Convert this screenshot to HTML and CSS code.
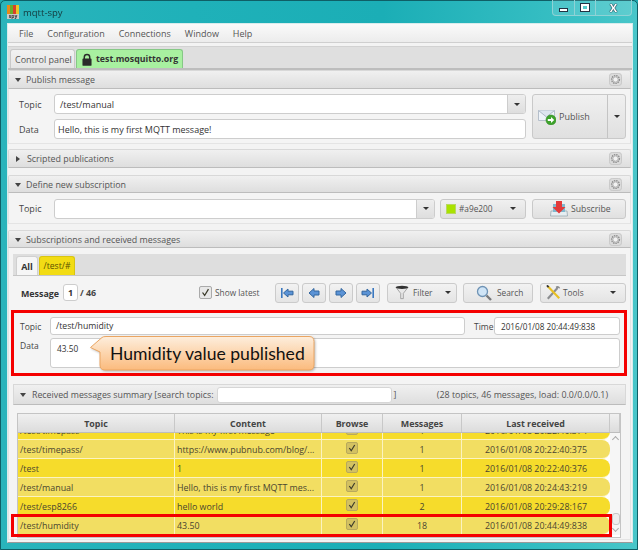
FILE: index.html
```html
<!DOCTYPE html>
<html lang="en">
<head>
<meta charset="utf-8">
<title>mqtt-spy</title>
<link rel="stylesheet" href="styles.css">
</head>
<body>
<svg class="defs" width="0" height="0" aria-hidden="true">
  <defs>
    <symbol id="gear" viewBox="0 0 14 14">
      <rect x=".5" y=".5" width="13" height="13" rx="3" fill="#dcdcdc" stroke="#c6c6c6"/>
      <circle cx="7" cy="7" r="4.2" fill="none" stroke="#8e8e8e" stroke-width="1.5" stroke-dasharray="1.6 .9"/>
      <circle cx="7" cy="7" r="2.8" fill="#f2f2f2" stroke="#9a9a9a" stroke-width=".7"/>
    </symbol>
    <symbol id="nav-left" viewBox="0 0 14 14">
      <path d="M2 7 7 2.500V5h5v4H7v2.500Z" fill="#5b93d6" stroke="#33669f"/>
    </symbol>
    <symbol id="nav-first" viewBox="0 0 14 14">
      <rect x="1" y="2" width="1.600" height="10" fill="#3a78c0"/>
      <path d="M3.500 7 8 3V5.200h5v3.600H8V11Z" fill="#5b93d6" stroke="#33669f"/>
    </symbol>
    <symbol id="chk" viewBox="0 0 13 13">
      <path d="M3 6.500 5.500 10 10 2.500" fill="none" stroke="#3a3a2a" stroke-width="1.500"/>
    </symbol>
  </defs>
</svg>

<div class="window">
  <header class="titlebar">
    <span class="appicon">
      <span class="appbars"><i class="b1"></i><i class="b2"></i><i class="b3"></i><i class="b4"></i></span>
      <span class="apptext">spy</span>
    </span>
    <span class="apptitle">mqtt-spy</span>
    <div class="wincontrols">
      <span class="wc wc-min"><i></i></span>
      <span class="wc wc-max"><i></i></span>
      <span class="wc wc-close">X</span>
    </div>
  </header>

  <div class="client">
    <nav class="menubar">
      <span>File</span><span>Configuration</span><span>Connections</span><span>Window</span><span>Help</span>
    </nav>

    <div class="conntabs">
      <span class="ctab">Control panel</span>
      <span class="ctab ctab-on">
        <svg class="lock" viewBox="0 0 11 14" width="10" height="13"><path d="M2.500 7V4.500a3 3 0 0 1 6 0V7" fill="none" stroke="#2b2b2b" stroke-width="1.600"/><rect x=".5" y="6" width="10" height="8" rx="1" fill="#2b2b2b"/></svg>
        test.mosquitto.org
      </span>
    </div>

    <section class="panel">
      <div class="phead"><i class="tri-d"></i><span>Publish message</span><svg class="gear"><use href="#gear"/></svg></div>
      <div class="pbody pub">
        <div class="pubform">
          <div class="frow"><label>Topic</label>
            <div class="combo"><span class="combo-text pad-t">/test/manual</span><span class="combo-btn"><i class="tri-s"></i></span></div>
          </div>
          <div class="frow"><label>Data</label>
            <div class="field">Hello, this is my first MQTT message!</div>
          </div>
        </div>
        <div class="pubbtn">
          <span class="pubmain">
            <svg viewBox="0 0 18 16" width="18" height="16"><path d="M.5 1.500h16v10H.5Z" fill="#eef3f9" stroke="#b5bfcb"/><path d="M.5 1.500 8.500 8l8-6.500" fill="#dde5ef" stroke="#aeb9c6"/><circle cx="13" cy="11" r="5" fill="#3fa32c" stroke="#2c8a20" stroke-width=".6"/><path d="M9.800 10h3.200V8l3.200 3-3.200 3v-2H9.800Z" fill="#fff"/></svg>
            Publish
          </span>
          <span class="pubarrow"><i class="tri-s"></i></span>
        </div>
      </div>
    </section>

    <section class="panel gap5">
      <div class="phead"><i class="tri-r"></i><span>Scripted publications</span><svg class="gear"><use href="#gear"/></svg></div>
    </section>

    <section class="panel gap7">
      <div class="phead short"><i class="tri-d"></i><span>Define new subscription</span><svg class="gear"><use href="#gear"/></svg></div>
      <div class="pbody sub">
        <label>Topic</label>
        <div class="combo subcombo"><span class="combo-text"></span><span class="combo-btn"><i class="tri-s"></i></span></div>
        <div class="btn colorbtn"><i class="swatch"></i><span>#a9e200</span><i class="tri-s"></i></div>
        <div class="btn subbtn">
          <svg viewBox="0 0 18 16" width="18" height="16"><path d="M1 10h16l.5 5H.5Z" fill="#e6eef2" stroke="#8fa0aa" stroke-width=".7"/><path d="M3 3h12v8H3Z" fill="#7fb8cf"/><path d="M6 0h6v6h3.500L9 12.500 2.500 6H6Z" fill="#e23a3a"/></svg>
          Subscribe
        </div>
      </div>
    </section>

    <section class="panel gap6 grow">
      <div class="phead short"><i class="tri-d"></i><span>Subscriptions and received messages</span><svg class="gear"><use href="#gear"/></svg></div>
      <div class="pbody subs">
        <div class="subtabs">
          <span class="stab stab-all">All</span>
          <span class="stab stab-y">/test/#</span>
        </div>

        <div class="msgbar">
          <b class="msglabel">Message</b>
          <span class="msgnum">1</span>
          <b class="msgtotal">/ 46</b>
          <span class="showlatest"><span class="cb"><svg><use href="#chk"/></svg></span>Show latest</span>
          <span class="tool nav"><svg><use href="#nav-first"/></svg></span>
          <span class="tool nav"><svg><use href="#nav-left"/></svg></span>
          <span class="tool nav flip"><svg><use href="#nav-left"/></svg></span>
          <span class="tool nav flip"><svg><use href="#nav-first"/></svg></span>
          <span class="tool t-filter">
            <svg viewBox="0 0 16 16" width="14" height="15"><path d="M1 2h14L9.500 9v6h-3V9Z" fill="#e8e8e8" stroke="#8a8a8a" stroke-width=".8"/><ellipse cx="8" cy="2.200" rx="7" ry="1.800" fill="#333"/></svg>
            <span>Filter</span><i class="tri-s"></i>
          </span>
          <span class="tool t-search">
            <svg viewBox="0 0 16 16" width="16" height="16"><circle cx="6.500" cy="6.500" r="5" fill="#cfe4f6" stroke="#6f93b5" stroke-width="1.300"/><path d="M10.500 10.500 15 15" stroke="#77797c" stroke-width="2.400"/></svg>
            <span>Search</span>
          </span>
          <span class="tool t-tools">
            <svg viewBox="0 0 17 16" width="15" height="15"><path d="M2 15 13 3" stroke="#8b8d90" stroke-width="2.400"/><path d="M11 1.500a3 3 0 0 1 5 2l-2.500-.5-1 1.500Z" fill="#8b8d90"/><path d="M2 1 15 14.500" stroke="#e9c022" stroke-width="2.400"/><path d="M1 0 3 2" stroke="#333" stroke-width="2"/></svg>
            <span>Tools</span><i class="tri-s"></i>
          </span>
        </div>

        <div class="details">
          <div class="drow">
            <label>Topic</label>
            <div class="field dtopic">/test/humidity</div>
            <label class="timelabel">Time</label>
            <div class="field dtime">2016/01/08 20:44:49:838</div>
          </div>
          <div class="drow drow2">
            <label>Data</label>
            <div class="field ddata">43.50</div>
          </div>
          <div class="redbox redbox-details"></div>
          <div class="callout">
            <svg viewBox="0 0 226 36" width="226" height="36">
              <defs><linearGradient id="cg" x1="0" y1="0" x2="0" y2="1"><stop offset="0" stop-color="#fdeedd"/><stop offset="1" stop-color="#fbbb7d"/></linearGradient></defs>
              <path d="M.5 11.500 12 1.500Q13 .5 16 .5H219Q224 .5 224 5.500V29Q224 34 219 34H15Q10 34 10 29V16Z" fill="url(#cg)" stroke="#eaa562"/>
            </svg>
            <span class="callout-text">Humidity value published</span>
          </div>
        </div>

        <div class="recv">
          <div class="rhead">
            <i class="tri-d"></i>
            <span>Received messages summary [search topics:</span>
            <span class="rsearch"></span>
            <span class="rclose">]</span>
            <span class="rstats">(28 topics, 46 messages, load: 0.0/0.0/0.1)</span>
          </div>
          <div class="rbody">
            <div class="table">
              <div class="thead">
                <span class="c1">Topic</span><span class="c2">Content</span><span class="c3">Browse</span><span class="c4">Messages</span><span class="c5">Last received</span><span class="c6"></span>
              </div>
              <div class="tbody">
                <div class="rows">
                  <div class="row hi"><span class="c1">/test/timepass</span><span class="c2">This is my first message</span><span class="c3"><span class="rcb"><svg><use href="#chk"/></svg></span></span><span class="c4">1</span><span class="c5">2016/01/08 20:22:40:374</span></div>
                  <div class="row lo"><span class="c1">/test/timepass/</span><span class="c2">https://www.pubnub.com/blog/...</span><span class="c3"><span class="rcb"><svg><use href="#chk"/></svg></span></span><span class="c4">1</span><span class="c5">2016/01/08 20:22:40:375</span></div>
                  <div class="row hi"><span class="c1">/test</span><span class="c2">1</span><span class="c3"><span class="rcb"><svg><use href="#chk"/></svg></span></span><span class="c4">1</span><span class="c5">2016/01/08 20:22:40:376</span></div>
                  <div class="row lo"><span class="c1">/test/manual</span><span class="c2">Hello, this is my first MQTT mes...</span><span class="c3"><span class="rcb"><svg><use href="#chk"/></svg></span></span><span class="c4">1</span><span class="c5">2016/01/08 20:24:43:219</span></div>
                  <div class="row hi"><span class="c1">/test/esp8266</span><span class="c2">hello world</span><span class="c3"><span class="rcb"><svg><use href="#chk"/></svg></span></span><span class="c4">2</span><span class="c5">2016/01/08 20:29:28:167</span></div>
                  <div class="row lo"><span class="c1">/test/humidity</span><span class="c2">43.50</span><span class="c3"><span class="rcb"><svg><use href="#chk"/></svg></span></span><span class="c4">18</span><span class="c5">2016/01/08 20:44:49:838</span></div>
                </div>
                <div class="scroll">
                  <i class="sc-up"></i>
                  <i class="sc-thumb"></i>
                  <i class="sc-down"></i>
                </div>
                <div class="redbox redbox-row"></div>
              </div>
            </div>
          </div>
        </div>
      </div>
    </section>
  </div>
</div>
</body>
</html>
```

FILE: styles.css
```css
* { box-sizing: border-box; }
html, body { margin: 0; padding: 0; overflow: hidden; }
body { font-family: "Open Sans", "Noto Sans", sans-serif; font-size: 9px; color: #444; background: #1fa9b0; }
.defs { position: absolute; }
i { display: block; font-style: normal; }
b { font-weight: 700; }
label { color: #444; }

.window {
  width: 638px; height: 550px; display: flex; flex-direction: column; filter: blur(.3px);
  background: linear-gradient(90deg, #2ab4bb 0%, #1fb1b9 30%, #1baeb6 60%, #3bc1c5 92%, #49c6c9 100%);
  border: 1px solid #0f5f66;
  border-radius: 5px 5px 0 0;
}

/* title bar */
.titlebar { height: 22px; flex: none; display: flex; align-items: center; padding-left: 6px; position: relative; }
.appicon { width: 12px; height: 14px; display: flex; flex-direction: column; background: #c9c9c9; }
.appbars { display: flex; height: 9px; align-items: flex-end; background: #444; }
.appbars i { flex: 1; height: 100%; }
.b1 { background: #e88a1a; } .b2 { background: #6aae2a; } .b3 { background: #d8402a; } .b4 { background: #e8c62a; }
.apptext { font-size: 5px; line-height: 5px; text-align: center; color: #333; font-weight: 700; }
.apptitle { margin-left: 4px; font-size: 9.500px; color: #14383c; }
.wincontrols { position: absolute; right: 5px; top: -1px; width: 80px; height: 16px; display: flex; border: 1px solid #8fd2d5; border-top: 0; border-radius: 0 0 4px 4px; background: rgba(255,255,255,.12); }
.wc { display: flex; align-items: center; justify-content: center; border-right: 1px solid #8fd2d5; color: #fff; }
.wc-min { width: 22px; } .wc-max { width: 21px; }
.wc-close { flex: 1; border-right: 0; font-size: 11px; font-weight: 700; color: #fff; text-shadow: 0 0 1px #123, 0 0 1px #123, 0 0 1px #123; }
.wc-min i { width: 9px; height: 4px; margin-top: 4px; background: #fff; border: 1px solid #234; }
.wc-max i { width: 8px; height: 7px; background: #5cc; border: 2px solid #fff; outline: 1px solid #234; }

.client { flex: 1; margin: 0 4px 6px 6px; background: #f3f3f3; display: flex; flex-direction: column; border: 1px solid #d8ecec; border-bottom-color: #999; padding-bottom: 2px; min-height: 0; }

/* menu */
.menubar { height: 19px; flex: none; display: flex; align-items: center; gap: 14px; padding-left: 11px; background: linear-gradient(#fafafa, #ececec); border-bottom: 1px solid #cfcfcf; font-size: 9px; color: #555; }

/* connection tabs */
.conntabs { height: 24px; flex: none; margin-top: 3px; padding: 4px 0 0 2px; display: flex; gap: 1px; background: #dfdfdf; border-top: 1px solid #d2d2d2; border-bottom: 2px solid #bdbdbd; align-items: flex-end; }
.ctab { width: 65px; height: 19px; display: flex; align-items: center; padding: 0 0 0 4px; border: 1px solid #c9c9c9; border-bottom: 0; border-radius: 3px 3px 0 0; background: linear-gradient(#f2f2f2, #e6e6e6); color: #555; font-size: 9px; white-space: nowrap; }
.ctab-on { width: 107px; background: #a8f0a0; border-color: #86c886; font-weight: 700; font-size: 8.800px; color: #333; gap: 4px; padding: 0 0 0 5px; }
.lock { flex: none; }

/* titled panes */
.panel { flex: none; margin: 0 1px 0 0; }
.gap5 { margin-top: 5px; } .gap6 { margin-top: 6px; } .gap7 { margin-top: 7px; }
.grow { flex: 1; min-height: 0; display: flex; flex-direction: column; }
.phead { height: 19px; display: flex; align-items: center; padding: 0 8px 0 6px; background: linear-gradient(#f0f0f0, #dedede); border: 1px solid #d8d8d8; border-bottom-color: #bcbcbc; border-radius: 2px 2px 0 0; color: #555; font-size: 8.900px; gap: 5px; }
.phead.short { height: 18px; }
.gear { margin-left: auto; width: 13px; height: 13px; flex: none; }
.tri-d { width: 0; height: 0; border: 3.500px solid transparent; border-top: 4.500px solid #444; border-bottom: 0; margin-top: 1px; }
.tri-r { width: 0; height: 0; border: 3.500px solid transparent; border-left: 4.500px solid #444; border-right: 0; margin: 0 2px 0 1px; }
.tri-s { width: 0; height: 0; border: 3px solid transparent; border-top: 3.500px solid #333; border-bottom: 0; flex: none; }
.pbody { background: #f4f4f4; border: 1px solid #e4e4e4; border-top: 0; }

/* form bits */
.field { height: 20px; background: #fff; border: 1px solid #cdcdcd; border-radius: 3px; display: flex; align-items: center; padding-left: 3px; color: #333; font-size: 9px; }
.combo { height: 20px; display: flex; background: #fff; border: 1px solid #cdcdcd; border-radius: 3px; }
.combo-text { flex: 1; display: flex; align-items: center; color: #333; font-size: 9px; }
.pad-t { padding-left: 5px; }
.combo-btn { width: 18px; flex: none; display: flex; align-items: center; justify-content: center; background: linear-gradient(#eee, #dedede); border-left: 1px solid #cdcdcd; border-radius: 0 2px 2px 0; }
.btn { height: 20px; display: flex; align-items: center; background: linear-gradient(#f0f0f0, #e0e0e0); border: 1px solid #c9c9c9; border-radius: 3px; color: #555; }

/* publish */
.pub { display: flex; height: 55px; padding: 5px 4px 0 10px; gap: 6px; }
.pubform { width: 507px; flex: none; display: flex; flex-direction: column; gap: 5px; }
.frow { display: flex; align-items: center; }
.frow label { width: 35px; flex: none; padding-top: 1px; }
.frow .combo, .frow .field { flex: 1; }
.pubbtn { width: 94px; height: 45px; flex: none; display: flex; background: linear-gradient(#f0f0f0, #e0e0e0); border: 1px solid #c9c9c9; border-radius: 3px; color: #555; }
.pubmain { flex: 1; display: flex; align-items: center; gap: 3px; padding-left: 5px; }
.pubarrow { width: 18px; display: flex; align-items: center; justify-content: center; border-left: 1px solid #c4c4c4; }

/* subscribe */
.sub { display: flex; align-items: center; height: 31px; padding: 1px 4px 0 10px; }
.sub label { width: 35px; flex: none; }
.subcombo { width: 381px; flex: none; }
.colorbtn { width: 86px; margin-left: 5px; padding: 0 9px 0 5px; gap: 3px; flex: none; font-size: 8.300px; }
.colorbtn .tri-s { margin-left: auto; }
.swatch { width: 10px; height: 10px; background: #a9e200; border: 1px solid #b9d860; }
.subbtn { width: 94px; margin-left: 6px; flex: none; gap: 3px; padding-left: 17px; font-size: 8.700px; }

/* subscriptions */
.subs { flex: 1; padding: 6px 4px 0; min-height: 0; display: flex; flex-direction: column; }
.subtabs { height: 22px; flex: none; display: flex; align-items: flex-end; gap: 1px; padding-left: 3px; background: #dedede; border-bottom: 1px solid #c6c6c6; }
.stab { height: 19px; display: flex; align-items: center; justify-content: center; border-radius: 3px 3px 0 0; border: 1px solid #d0d0d0; border-bottom: 0; }
.stab-all { width: 22px; background: #f6f6f6; font-weight: 700; color: #333; }
.stab-y { width: 36px; background: #f2dc14; border-color: #d9c510; color: #5a5200; font-size: 8.600px; }

.msgbar { height: 34px; flex: none; display: flex; align-items: center; padding: 0 0 1px 8px; }
.msglabel { width: 38px; flex: none; color: #333; font-size: 8.900px; padding-top: 2px; }
.msgnum { width: 15px; height: 17px; flex: none; margin-left: 4px; background: #fff; border: 1px solid #cdcdcd; border-radius: 3px; display: flex; align-items: center; justify-content: center; font-weight: 700; color: #333; }
.msgtotal { margin-left: 2px; color: #444; width: 119px; flex: none; font-size: 8.900px; }
.showlatest { width: 76px; flex: none; display: flex; align-items: center; gap: 3px; font-size: 8.300px; color: #555; }
.cb { width: 13px; height: 13px; border: 1px solid #aaa; border-radius: 2px; background: #e8e8e8; flex: none; }
.cb svg { width: 11px; height: 11px; display: block; }
.tool { height: 20px; flex: none; display: flex; align-items: center; background: linear-gradient(#f2f2f2, #e4e4e4); border: 1px solid #cbcbcb; border-radius: 3px; color: #555; margin-right: 3px; font-size: 8.300px; }
.nav { width: 24px; justify-content: center; }
.nav svg { width: 14px; height: 14px; }
.flip svg { transform: scaleX(-1); }
.t-filter { width: 70px; margin-left: 4px; margin-right: 6px; padding: 0 5px 0 7px; gap: 4px; }
.t-filter .tri-s, .t-tools .tri-s { margin-left: auto; }
.t-search { width: 70px; margin-right: 7px; padding-left: 12px; gap: 5px; }
.t-tools { width: 86px; margin-right: 0; padding: 0 9px 0 5px; gap: 2px; }

.details { height: 66px; flex: none; position: relative; padding: 7px 6px 0 7px; }
.drow { display: flex; align-items: center; }
.drow label { width: 30px; flex: none; font-size: 8.500px; }
.dtopic { width: 415px; height: 18px; flex: none; font-size: 8.700px; padding-left: 5px; }
.drow .timelabel { margin-left: 9px; width: 20px; }
.dtime { width: 126px; height: 18px; flex: none; font-size: 8.200px; padding-left: 6px; }
.drow2 { margin-top: 3px; align-items: flex-start; }
.drow2 label { padding-top: 2px; }
.ddata { flex: 1; height: 30px; align-items: flex-start; padding: 4px 0 0 6px; font-size: 8.300px; }
.redbox { position: absolute; border: 3px solid #f40000; pointer-events: none; }
.redbox-details { left: -2px; right: -1px; top: 0; bottom: 0; }
.callout { position: absolute; left: 77px; top: 26px; width: 226px; height: 36px; }
.callout svg { display: block; filter: drop-shadow(1px 1px 1px rgba(0,0,0,.25)); }
.callout-text { position: absolute; left: 20px; top: 8px; font-family: "Lato", sans-serif; font-size: 17.600px; line-height: 20px; color: #111; white-space: nowrap; }

/* received summary */
.recv { margin-top: 8px; flex: 1; min-height: 0; display: flex; flex-direction: column; }
.rhead { height: 21px; flex: none; display: flex; align-items: center; padding: 0 7px 0 6px; gap: 4px; background: linear-gradient(#f0f0f0, #dedede); border: 1px solid #d8d8d8; border-bottom-color: #bcbcbc; color: #555; font-size: 8.800px; }
.rhead .tri-d { margin-right: 2px; }
.rsearch { width: 175px; height: 16px; background: #fff; border: 1px solid #d6d6d6; border-radius: 3px; flex: none; }
.rclose { margin-left: -3px; }
.rstats { margin-left: auto; padding-right: 10px; font-size: 8.900px; }
.rbody { flex: 1; min-height: 0; padding: 8px 5px 0 4px; background: #f4f4f4; }
.table { height: 125px; background: #fff; border: 1px solid #c4c4c4; display: flex; flex-direction: column; position: relative; }
.thead { height: 19px; flex: none; display: flex; background: linear-gradient(#f0f0f0, #dcdcdc); border-bottom: 1px solid #bdbdbd; font-weight: 700; color: #444; font-size: 8.900px; }
.thead span { display: flex; align-items: center; justify-content: center; border-right: 1px solid #c8c8c8; }
.c1 { width: 157px; flex: none; } .c2 { width: 147px; flex: none; } .c3 { width: 61px; flex: none; }
.c4 { width: 79px; flex: none; } .c5 { width: 148px; flex: none; } .c6 { flex: 1; }
.tbody { height: 102px; flex: none; display: flex; position: relative; }
.rows { width: 592px; flex: none; height: 102px; overflow: hidden; display: flex; flex-direction: column; justify-content: flex-end; }
.row { height: 19px; flex: none; display: flex; border-bottom: 1px solid #fbf3c0; border-radius: 0 8px 8px 0; color: #4a4530; font-size: 8.900px; }
.row span.c1, .row span.c2, .row span.c3, .row span.c4, .row span.c5 { display: flex; align-items: center; border-right: 1px solid #fbf3c0; }
.row .c1, .row .c2 { padding-left: 2px; white-space: nowrap; overflow: hidden; }
.row .c3, .row .c4, .row .c5 { justify-content: center; }
.row span.c5 { border-right: 0; }
.hi { background: #f6dc2b; } .lo { background: #f2de62; }
.rcb { width: 12px; height: 12px; background: #d3c161; border: 1px solid #b8a95c; border-radius: 2px; display: block; margin-top: -3px; }
.rcb svg { width: 10px; height: 10px; display: block; }
.scroll { flex: 1; position: relative; display: flex; flex-direction: column; align-items: center; justify-content: space-between; padding: 4px 0; background: #f6f6f6; }
.sc-up, .sc-down { width: 5px; height: 5px; border-left: 1px solid #aaa; border-top: 1px solid #aaa; transform: rotate(45deg); }
.sc-down { transform: rotate(225deg); }
.sc-thumb { position: absolute; left: 2px; top: 80px; width: 8px; height: 12px; background: #eee; border: 1px solid #c8c8c8; border-radius: 3px; }
.redbox-row { left: -7px; top: 81px; width: 601px; height: 23px; }
```
